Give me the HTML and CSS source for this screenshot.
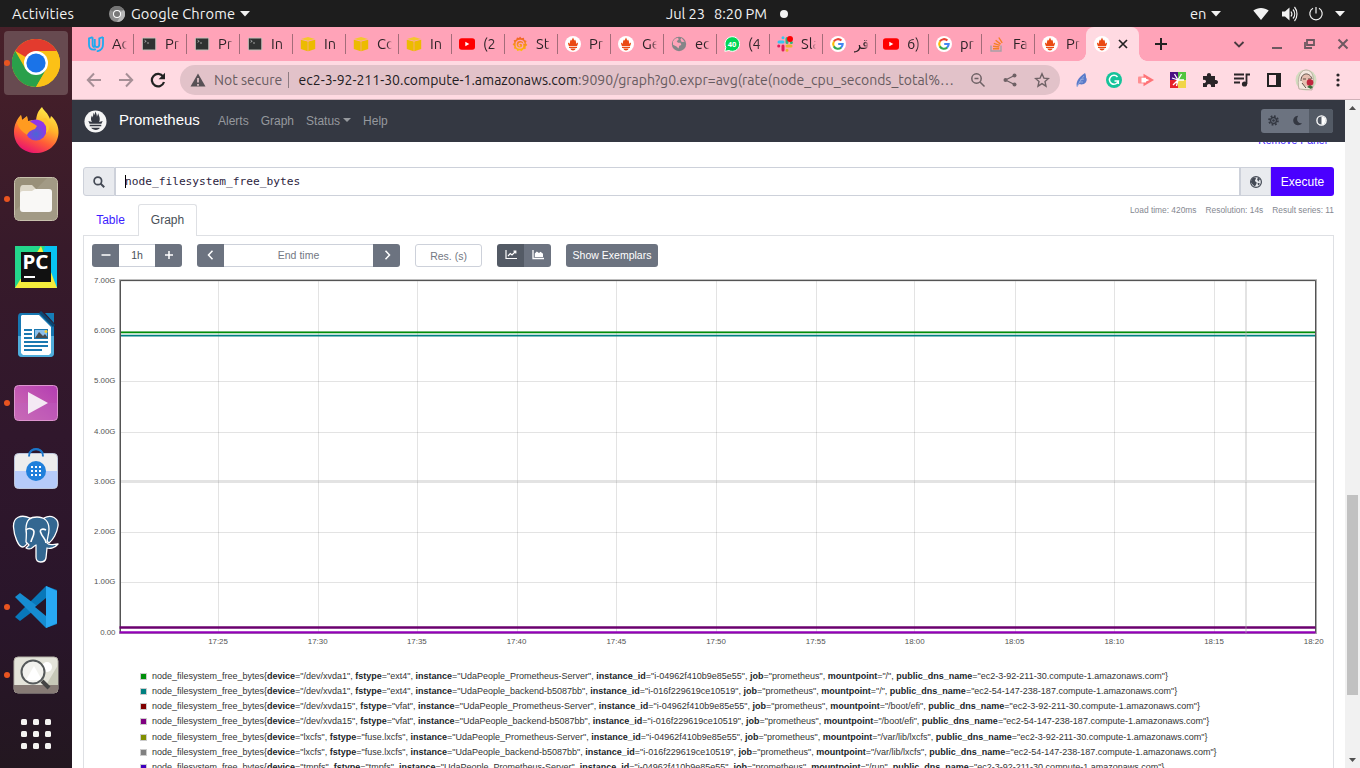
FILE: index.html
```html
<!DOCTYPE html>
<html lang="en">
<head>
<meta charset="utf-8">
<title>Prometheus Time Series Collection and Processing Server</title>
<link rel="stylesheet" href="styles.css">
</head>
<body>
<svg class="defs" aria-hidden="true">
  <defs>
    <symbol id="udacity" viewBox="0 0 16 16"><path d="M4.600 1.200L1 2.300v6.200c0 3.300 2 5.200 4.600 5.200.8 0 1.500-.2 2.200-.6M4.600 1.200v7c0 1.800.8 2.800 2 3M15 1v7.300c0 3.700-2 6.500-6.300 7M15 1l-3.700 1.300v6c0 1.500-.8 2.800-2.300 2.800-1.300 0-2.200-.8-2.200-2.400V3" fill="none" stroke="#1fa9ef" stroke-width="1.800"/></symbol>
    <symbol id="term" viewBox="0 0 16 16"><rect x="1.300" y="2" width="13.500" height="12" rx="1" fill="#2f3231" stroke="#c6c2bc"/><path d="M3.500 4.200l1.700 1.100-1.700 1M6 7h2" stroke="#bbb" stroke-width=".8" fill="none"/></symbol>
    <symbol id="aws" viewBox="0 0 16 16"><path d="M1 3l7-2 7 2-7 1.800z" fill="#f5c72c"/><path d="M.8 3.800l6.900 1.700v9.700L.8 13zM15.200 3.800L8.300 5.500v9.700l6.900-2.200z" fill="#ecbb00"/></symbol>
    <symbol id="youtube" viewBox="0 0 16 16"><rect y="2.300" width="16" height="11.500" rx="2.800" fill="#f00"/><path d="M6.300 5.800v4.500L10.300 8z" fill="#fff"/></symbol>
    <symbol id="grafana" viewBox="0 0 16 16"><linearGradient id="gg" x2="0" y2="1"><stop stop-color="#f15a29"/><stop offset="1" stop-color="#fcc10b"/></linearGradient><path d="M8 .5l1.500 1.800 2.400-.5.4 2.200 2.300 1-.9 2 1.600 2.100-1.700 1.400.1 2.500-2.400.2-1.700 2.100-1.900-1-2.400.8-.9-2-2.500-.7.500-2.200L.6 8.300l1.700-1.500L1.700 4.300l2.400-.6L5 1.500l2 .6z" fill="url(#gg)"/><path d="M12 8c-.1-2.200-1.700-3.700-3.900-3.700-2.400 0-4 1.700-4 4 0 2.200 1.600 3.900 3.700 3.900 1.700 0 3-1.100 3-2.700 0-1.400-1-2.300-2.200-2.300-1.100 0-1.800.8-1.700 1.700.1.700.6 1.100 1.300 1.100" fill="none" stroke="#ffa3b8" stroke-width="1.200"/></symbol>
    <symbol id="prom" viewBox="0 0 16 16"><circle cx="8" cy="8" r="8" fill="#fff"/><path d="M8 1.500c.7 1.300 1 2 1.200 3.200l.8-1.200c.8 1.300 1.300 2.600 1.100 4.200l1.900-1.300c0 1.700-.5 2.700-1 3.600H4C3.500 9.100 3 8.100 3 6.400l1.900 1.300c-.2-1.600.3-2.900 1.100-4.200l.8 1.200C7 3.500 7.300 2.800 8 1.500zM4 10.700h8v1.300H4zM5.300 12.600h5.400c-.4 1.300-1.500 1.900-2.700 1.900s-2.300-.6-2.700-1.900z" fill="#ea4a12"/></symbol>
    <symbol id="globe" viewBox="0 0 16 16"><circle cx="8" cy="8" r="7.200" fill="#858588"/><path d="M2 5.300l2-2.600 3-1 .7 1.700-2 1.800 1.300 1.500h2.500l.8 2.300-2 .7-.8 2.900-2-2.100-3.500-1.800zM10.500 2l3.200 3.700-3 .2-1.300-2.300z" fill="#ffa3b8"/></symbol>
    <symbol id="whatsapp" viewBox="0 0 16 16"><path d="M.8 15.300l1-4A7.300 7.300 0 1 1 5 14.500z" fill="#00d757" stroke="#fff" stroke-width="1"/><text x="8.100" y="10.800" font-size="7.500" font-weight="700" fill="#fff" text-anchor="middle" font-family="Noto Sans,sans-serif">40</text></symbol>
    <symbol id="slack" viewBox="0 0 16 16"><g stroke-width="3" stroke-linecap="round"><path d="M2 6h4M6 1.700v.1" stroke="#36c5f0"/><path d="M10 2.500v4M14.300 6.500h.1" stroke="#2eb67d"/><path d="M10 10h4M10 14.200v.1" stroke="#ecb22e"/><path d="M6 10v4M1.700 10h.1" stroke="#e01e5a"/></g><circle cx="13" cy="3" r="3" fill="#f00"/></symbol>
    <symbol id="google" viewBox="0 0 16 16"><circle cx="8" cy="8" r="8" fill="#fff"/><g fill="none" stroke-width="2.100"><path d="M11.400 4.600A4.800 4.800 0 0 0 3.800 5.600" stroke="#ea4335"/><path d="M3.900 5.500a4.800 4.800 0 0 0 0 5" stroke="#fbbc05"/><path d="M3.800 10.400a4.800 4.800 0 0 0 7.400 1" stroke="#34a853"/><path d="M11 11.600A4.800 4.800 0 0 0 12.700 8H8.200" stroke="#4285f4"/></g></symbol>
    <symbol id="stack" viewBox="0 0 16 16"><path d="M2 9.500V15h10V9.500" fill="none" stroke="#a8a0a5" stroke-width="1.400"/><path d="M4 12.700h6.200M4.100 10.200l6.200.8M4.800 7.300l6 2M6.600 4.300l5 3.800M9.800 1.500l3.400 5.400" stroke="#f48024" stroke-width="1.400"/></symbol>
    <symbol id="tri" viewBox="0 0 10 6"><path d="M0 0h10L5 5.500z" fill="currentColor"/></symbol>
  </defs>
</svg>

<header class="topbar">
  <div class="topbar-left"><span class="activities">Activities</span>
    <svg class="app-icon" viewBox="0 0 16 16"><circle cx="8" cy="8" r="8" fill="#8c8c8c"/><path d="M8 8L1.200 4A8 8 0 0 1 15 4H8z" fill="#757575"/><path d="M8 8l7-4a8 8 0 0 1-7 12l3.500-6z" fill="#b5b5b5"/><circle cx="8" cy="8" r="4" fill="#fff"/><circle cx="8" cy="8" r="3" fill="#777"/></svg>
    <span class="appname">Google Chrome</span><svg class="caret"><use href="#tri"/></svg></div>
  <div class="clock"><span>Jul 23</span><span>8:20 PM</span><i class="notify"></i></div>
  <div class="topbar-right"><span class="lang">en</span><svg class="caret"><use href="#tri"/></svg>
    <svg class="tray wifi" viewBox="0 0 16 16"><path d="M.3 4.500C4.800 1 11.200 1 15.700 4.500L8 14z" fill="#f2f2f2"/></svg>
    <svg class="tray sound" viewBox="0 0 16 16"><path d="M0 5.500h3L7.500 1.500v13L3 10.500H0z" fill="#f2f2f2"/><path d="M9 5.500c1 1.400 1 3.600 0 5M11 3.500c2.200 2.600 2.200 6.400 0 9M12.500 1c3.300 4 3.300 10 0 14" fill="none" stroke="#f2f2f2" stroke-width="1.200"/></svg>
    <svg class="tray power" viewBox="0 0 16 16"><path d="M5 2.300a6.200 6.200 0 1 0 6 0M8 1v6.500" fill="none" stroke="#f2f2f2" stroke-width="1.200"/></svg>
    <svg class="caret"><use href="#tri"/></svg></div>
</header>

<div class="desktop">
<aside class="dock">
  <div class="dock-item active running"><svg viewBox="0 0 48 48"><circle cx="24" cy="24" r="24" fill="#fbc116"/><path d="M24 24L3.200 12A24 24 0 0 1 44.800 12H24z" fill="#e33b2e"/><path d="M13.600 30L3.200 12A24 24 0 0 0 24 48l10.400-18z" fill="#2aa04a"/><path d="M24 12h20.800A24 24 0 0 1 24 48l10.400-18z" fill="#fbc116"/><circle cx="24" cy="24" r="12" fill="#fff"/><circle cx="24" cy="24" r="9.600" fill="#1a73e8"/></svg></div>
  <div class="dock-item"><svg viewBox="0 0 48 48"><defs><linearGradient id="ff" x1=".8" x2=".35" y2="1"><stop stop-color="#fff44f"/><stop offset=".4" stop-color="#ffb52a"/><stop offset=".7" stop-color="#ff5b38"/><stop offset="1" stop-color="#e9146f"/></linearGradient><radialGradient id="fp" cy=".7"><stop stop-color="#4967d4"/><stop offset="1" stop-color="#9036e8"/></radialGradient></defs><path d="M30 0c2 4 6 6 8 12l1-3c4 3 8 10 7.500 17C46 38 36 46 24 46S2 38 2 25c0-7 3-13 7-17l1 5 5-4 1 5c4-1 5-1 8-1 1-6 2-9 6-13z" fill="url(#ff)"/><circle cx="24" cy="23" r="10.500" fill="url(#fp)"/><path d="M5 16l4-8 1 5 5-3 1 4c4 1 6 3 9 5l-2 3c-4 1-7 3-8 6-4-3-8-6-10-12z" fill="#ff9b20"/><path d="M26 13c6 0 10 5 8 13 5-4 4-10 0-15z" fill="#ffc52e"/></svg></div>
  <div class="dock-item running"><svg viewBox="0 0 48 48"><rect x="2.500" y="2.500" width="43" height="43" rx="5" fill="#999079" stroke="#c8c1ad"/><path d="M3 36L35 3h8q2 0 2 2v38q0 2-2 2H3z" fill="#a9a18d" opacity=".6"/><path d="M8 15q0-5 3-5h9l4 4h9v8H8z" fill="#ddd7c8"/><path d="M8 19q0-3 3-3h9l3-2h14q3 0 3 3v17q0 3-3 3H11q-3 0-3-3z" fill="#f9f8f6"/></svg></div>
  <div class="dock-item"><svg viewBox="0 0 48 48"><rect x="3" y="3" width="42" height="42" fill="#21d789"/><path d="M21 45l12-42h12v42z" fill="#07c3f2"/><path d="M3 45L29 3l16 42z" fill="#f5ed3c"/><path d="M3 3h24L3 42z" fill="#24d68c"/><rect x="9" y="9" width="30" height="30" fill="#111"/><text x="10.500" y="25.500" font-family="Noto Sans,sans-serif" font-weight="700" font-size="19" textLength="26" lengthAdjust="spacingAndGlyphs" fill="#fff">PC</text><path d="M12 34h11" stroke="#fff" stroke-width="2"/></svg></div>
  <div class="dock-item"><svg viewBox="0 0 48 48"><path d="M9 2h20l13 13v27q0 4-4 4H10q-4 0-4-4V6q0-4 3-4z" fill="#1777b1"/><path d="M6 25h36v17q0 4-4 4H10q-4 0-4-4z" fill="#50addb"/><path d="M10 4h17l12 12v26l-2 2H11l-2-2V5z" fill="#fff"/><path d="M33 2h9v10z" fill="#167db7"/><path d="M28 1l14 14" stroke="#0b4772" stroke-width="3"/><path d="M12 19h8M12 23h8M12 27h8M12 31h24M12 35h24M12 39h18" stroke="#1a78b0" stroke-width="2"/><rect x="22.500" y="18.500" width="13" height="9" fill="#8abfeb" stroke="#1a78b0"/><path d="M23 27l4-6 4 4 2-2 3 4z" fill="#454c50"/><circle cx="34" cy="20.500" r="1.500" fill="#f5cf38"/></svg></div>
  <div class="dock-item running"><svg viewBox="0 0 48 48"><defs><linearGradient id="vd" y1="1" x2="1" y2="0"><stop stop-color="#ce6fb1"/><stop offset="1" stop-color="#b43db3"/></linearGradient></defs><rect x="2.500" y="6.500" width="43" height="35" rx="4" fill="url(#vd)" stroke="#dc94ce"/><path d="M3 24h42v14q0 3-3 3H6q-3 0-3-3z" fill="#bd60c0" opacity=".35"/><path d="M16 13l20 11-20 11z" fill="#f4e9f4"/></svg></div>
  <div class="dock-item"><svg viewBox="0 0 48 48"><path d="M17 9c0-9 14-9 14 0" fill="none" stroke="#1b76c9" stroke-width="2.200"/><rect x="2.500" y="6.500" width="43" height="35" rx="4" fill="#ededed" stroke="#bbc5db"/><path d="M3 24h42v13q0 4-3 4H6q-3 0-3-4z" fill="#b6cbfa"/><path d="M17 9.500c0-10 14-10 14 0" fill="none" stroke="#1b76c9" stroke-width="2"/><circle cx="24" cy="24" r="10" fill="#2080db"/><path d="M19 20h2m2 0h2m2 0h2M19 24h2m2 0h2m2 0h2M19 28h2m2 0h2m2 0h2" stroke="#fff" stroke-width="2"/></svg></div>
  <div class="dock-item"><svg viewBox="0 0 48 48"><g fill="#336791" stroke="#fff" stroke-width="1.300" stroke-linejoin="round"><path d="M18 3C9-1 1 2 1.500 12c.5 9 5 20 9 20 3 0 5-4 6-6-3-5-3-16 1.500-23z"/><path d="M32 3c7-4 15 0 14 8-1 7-5 14-9 17-4-3-8-15-5-25z"/><path d="M14 14c0-10 5-12 11-12 8 0 12 5 12 12 0 6-2 9-2 14 2 3 7 1 11 1-3 4-8 5-11 4l-1 10c-1 5-10 6-10-1V30c-3 1-4 6-10 3l3-3-3-3c0-4 1-8 0-13z"/></g><path d="M14 15c3-3 8-1 8 2 0 5-3 7-3 10M34 15c-4-2-7 0-5 3 1 4 5 6 5 10" fill="none" stroke="#fff" stroke-width="1.600"/></svg></div>
  <div class="dock-item running"><svg viewBox="0 0 48 48"><path d="M3 34l5 4L45 10V7L34 3z" fill="#0877b9"/><path d="M3 14l5-4 37 28v3l-11 4z" fill="#168cd1"/><path d="M34 3l11 5v32l-11 5z" fill="#28a8f3"/><path d="M34 15L23 24l11 9z" fill="#261528"/></svg></div>
  <div class="dock-item running"><svg viewBox="0 0 48 48"><rect x="2" y="6" width="44" height="36" rx="4" fill="#e4e4da" stroke="#b6b3a9"/><path d="M30 41L46 14v24q0 3-3 3z" fill="#c7c8b8"/><path d="M2 34h44v4q0 4-3 4H5q-3 0-3-4z" fill="#877b76"/><circle cx="35" cy="16" r="5" fill="#fff"/><path d="M14 29l8-14 8 14z" fill="#fff"/><circle cx="21" cy="21" r="11.500" fill="#fff8" stroke="#55595a" stroke-width="2"/><path d="M30 30l7 7" stroke="#444" stroke-width="4"/></svg></div>
  <div class="dock-item show-apps"><svg viewBox="0 0 30 30" fill="#f4f2f1"><rect width="6" height="6" rx="1.500"/><rect x="12" width="6" height="6" rx="1.500"/><rect x="24" width="6" height="6" rx="1.500"/><rect y="12" width="6" height="6" rx="1.500"/><rect x="12" y="12" width="6" height="6" rx="1.500"/><rect x="24" y="12" width="6" height="6" rx="1.500"/><rect y="24" width="6" height="6" rx="1.500"/><rect x="12" y="24" width="6" height="6" rx="1.500"/><rect x="24" y="24" width="6" height="6" rx="1.500"/></svg></div>
</aside>

<main class="browser">
  <nav class="tabs">
    <div class="tab"><svg><use href="#udacity"/></svg><span>Ac</span></div>
    <div class="tab"><svg><use href="#term"/></svg><span>Pr</span></div>
    <div class="tab"><svg><use href="#term"/></svg><span>Pr</span></div>
    <div class="tab"><svg><use href="#term"/></svg><span>In</span></div>
    <div class="tab"><svg><use href="#aws"/></svg><span>In</span></div>
    <div class="tab"><svg><use href="#aws"/></svg><span>Co</span></div>
    <div class="tab"><svg><use href="#aws"/></svg><span>In</span></div>
    <div class="tab"><svg><use href="#youtube"/></svg><span>(2</span></div>
    <div class="tab"><svg><use href="#grafana"/></svg><span>St</span></div>
    <div class="tab"><svg><use href="#prom"/></svg><span>Pr</span></div>
    <div class="tab"><svg><use href="#prom"/></svg><span>Ge</span></div>
    <div class="tab"><svg><use href="#globe"/></svg><span>ec</span></div>
    <div class="tab"><svg><use href="#whatsapp"/></svg><span>(4</span></div>
    <div class="tab"><svg><use href="#slack"/></svg><span>Sla</span></div>
    <div class="tab"><svg><use href="#google"/></svg><span>قر</span></div>
    <div class="tab"><svg><use href="#youtube"/></svg><span>6)</span></div>
    <div class="tab"><svg><use href="#google"/></svg><span>pr</span></div>
    <div class="tab"><svg><use href="#stack"/></svg><span>Fa</span></div>
    <div class="tab last"><svg><use href="#prom"/></svg><span>Pr</span></div>
    <div class="tab current"><svg><use href="#prom"/></svg><svg class="close" viewBox="0 0 10 10"><path d="M1 1l8 8M9 1L1 9" stroke="#222" stroke-width="1.700"/></svg></div>
    <svg class="newtab" viewBox="0 0 12 12"><path d="M6 0v12M0 6h12" stroke="#222" stroke-width="2"/></svg>
    <div class="winctl">
      <svg viewBox="0 0 16 16"><path d="M3.500 6L8 10.500 12.500 6" fill="none" stroke="#4a3a40" stroke-width="1.800"/></svg>
      <svg viewBox="0 0 16 16"><path d="M3 12h10" stroke="#6d5860" stroke-width="2"/></svg>
      <svg viewBox="0 0 16 16"><path d="M6 4h7v5H6zM4 6v6h7" fill="none" stroke="#6d5860" stroke-width="1.800"/></svg>
      <svg viewBox="0 0 16 16"><path d="M3.500 3.500l9 9M12.500 3.500l-9 9" stroke="#6d5860" stroke-width="2"/></svg>
    </div>
  </nav>
  <div class="toolbar">
    <svg class="tb" viewBox="0 0 16 16"><path d="M15 8H2M8 1.500L1.800 8 8 14.500" fill="none" stroke="#a68f96" stroke-width="2"/></svg>
    <svg class="tb" viewBox="0 0 16 16"><path d="M1 8h13M8 1.500L14.200 8 8 14.500" fill="none" stroke="#a68f96" stroke-width="2"/></svg>
    <svg class="tb" viewBox="0 0 16 16"><path d="M13.200 4.600A6.200 6.200 0 1 0 14 10" fill="none" stroke="#222" stroke-width="2.200"/><path d="M15 .8v6.400H8.600z" fill="#222"/></svg>
    <div class="omnibox">
      <svg class="warn" viewBox="0 0 16 14"><path d="M8 0.500l7.500 13H.5z" fill="#575055"/><path d="M8 5v4.500M8 11v1.700" stroke="#e2c4ca" stroke-width="1.700"/></svg>
      <span class="insecure">Not secure</span><span class="url"><b>ec2-3-92-211-30.compute-1.amazonaws.com</b>:9090/graph?g0.expr=avg(rate(node_cpu_seconds_total%…</span>
      <svg class="tb" viewBox="0 0 16 16"><circle cx="6.500" cy="6.500" r="4.700" fill="none" stroke="#6e6165" stroke-width="1.500"/><path d="M10 10l4.500 4.500M4.500 6.500h4" stroke="#6e6165" stroke-width="1.500"/></svg>
      <svg class="tb" viewBox="0 0 16 16"><path d="M12.500 3.500L3.500 8l9 4.500" fill="none" stroke="#6e6165" stroke-width="1.300"/><g fill="#6e6165"><circle cx="12.500" cy="3.500" r="2"/><circle cx="3.500" cy="8" r="2"/><circle cx="12.500" cy="12.500" r="2"/></g></svg>
      <svg class="tb" viewBox="0 0 16 16"><path d="M8 1.800l1.900 4.300 4.600.4L11 9.600l1 4.600-4-2.500-4 2.500 1-4.600-3.500-3.100 4.600-.4z" fill="none" stroke="#6e6165" stroke-width="1.400"/></svg>
    </div>
    <svg class="tb" viewBox="0 0 16 16"><path d="M3 15c-1.500-5 1-9 8-14 1 2 1 3 1 4.500 1.500 2 .5 5-2 6.500-3 1-5 0-5 0z" fill="#5b7bc9"/><path d="M3 15c2-5 4-7 7-11M6 8l4-1M5 10l4 0" stroke="#9db3e3" fill="none" stroke-width=".8"/></svg>
    <svg class="tb" viewBox="0 0 16 16"><circle cx="8" cy="8" r="8" fill="#15c39a"/><path d="M11.500 5A4.500 4.500 0 1 0 12.300 9H8.500M12.300 8.500V12" fill="none" stroke="#fff" stroke-width="1.500"/></svg>
    <svg class="tb" viewBox="0 0 16 16"><rect y="4.500" width="7" height="7" rx="1" fill="#ff9092"/><path d="M5.500 1.700L16 8 5.500 14.300z" fill="#ff7377"/><path d="M3.500 5.700h4.500v1L11.500 8 8 9.500v1H3.500z" fill="#fff"/></svg>
    <svg class="tb" viewBox="0 0 16 16"><path fill="#4b1082" d="M0 0h8v8H0z"/><path fill="#52c43e" d="M8 0h8v8H8z"/><path fill="#e62129" d="M0 8h8v8H0z"/><path fill="#f1d548" d="M8 8h8v8H8z"/><path d="M8 8L4.500 2M8 8l3.500-6M8 8h6M8 8l-5 5M8 8l-1.500 6M8 8L2 6" stroke="#fff" stroke-width="1.300"/></svg>
    <svg class="tb" viewBox="0 0 16 16"><path d="M1 4h4c-1-4 5-4 4 0h4v4c4-1 4 5 0 4v3H9c1-4-5-4-4 0H1v-4c4 1 4-4 0-3z" fill="#2a2528"/></svg>
    <svg class="tb" viewBox="0 0 16 16"><path d="M0 2.500h10M0 6.500h10M0 10.500h6M12.500 12V2.500H16" stroke="#2a2528" stroke-width="1.800" fill="none"/><circle cx="10.500" cy="12" r="2.600" fill="#2a2528"/></svg>
    <svg class="tb" viewBox="0 0 16 16"><rect x="2" y="2" width="12" height="12" fill="none" stroke="#222" stroke-width="2"/><path d="M10 2h4v12h-4z" fill="#222"/></svg>
    <svg class="avatar" viewBox="0 0 22 22"><circle cx="11" cy="11" r="10.500" fill="#d3dcc0"/><path d="M4 20C2 12 4 1 11 1s9 8 6 20z" fill="#f4e8df" stroke="#a89a8c" stroke-width=".7"/><path d="M7 9c1-5 8-5 9 0l-1 7c-3 3-7 0-8-3z" fill="#e6bfb0"/><path d="M6 12C6 3 15 3 17 10M8 10h3m2 0h3M7 14l4 5" fill="none" stroke="#5e4a40"/><circle cx="15" cy="13.500" r="3.300" fill="#c2253e"/><path d="M12 18l3-2 3 2-2 2z" fill="#3b6c39"/></svg>
    <svg class="tb" viewBox="0 0 16 16" fill="#2a2528"><circle cx="8" cy="3" r="1.600"/><circle cx="8" cy="8" r="1.600"/><circle cx="8" cy="13" r="1.600"/></svg>
  </div>

  <div class="viewport">
  <div class="page">
    <nav class="navbar">
      <svg class="logo" viewBox="0 0 24 24"><circle cx="12" cy="12" r="11.500" fill="#f5f5f5"/><path d="M11.800 1.500c1 2 1.600 3.200 1.700 5.500l1.400-3.500c.3 2.500 2 4 1.500 7l-.6 2 3.700-1-1.300 2.800H5.800L4.500 11.500l3.700 1-.8-2c-.3-2 .2-3.500.9-4.700l1 2c.2-2 .2-3.500 1-5l.8 2.700zM6 15.500h12v1.500H6zM7.500 18.500h9c-1 3-7 3-9 0z" fill="#343842"/></svg>
      <span class="brand">Prometheus</span>
      <a>Alerts</a><a>Graph</a><a class="drop">Status</a><a>Help</a>
      <div class="themes">
        <span><svg viewBox="0 0 16 16"><g stroke="#343842" fill="none"><circle cx="8" cy="8" r="4.300" stroke-width="2"/><circle cx="8" cy="8" r="6.500" stroke-width="2.500" stroke-dasharray="2.600 2.500"/></g><circle cx="8" cy="8" r="1.900" fill="#343842"/></svg></span>
        <span><svg viewBox="0 0 16 16"><path d="M9 1a7 7 0 1 0 5.500 11C9 13 5 7 9 1z" fill="#343842"/></svg></span>
        <span class="on"><svg viewBox="0 0 16 16"><circle cx="8" cy="8" r="6.700" fill="none" stroke="#fff" stroke-width="2"/><path d="M8 2a6 6 0 0 1 0 12z" fill="#fff"/></svg></span>
      </div>
    </nav>
    <div class="content">
      <div class="remove"><a>Remove Panel</a></div>
      <div class="query">
        <span class="addon search"><svg viewBox="0 0 16 16"><circle cx="6.500" cy="6.500" r="5" fill="none" stroke="#444a55" stroke-width="2.300"/><path d="M10 10l5 5" stroke="#444a55" stroke-width="2.500"/></svg></span>
        <div class="expr"><i class="cursor"></i>node_filesystem_free_bytes</div>
        <span class="addon globe"><svg viewBox="0 0 16 16"><circle cx="8" cy="8" r="7.200" fill="#e9ebef" stroke="#444a55" stroke-width="1.600"/><path d="M1 8l2-5 4-1.500 1 2L6.500 6l1 1.500 1.500 1-.5 2L6.500 14 4 12zM10.500 2l3 2-2 2.500 1.500 1.500L11 7 9.500 5zM10 9l3 .5-1 3-1.500-1z" fill="#444a55"/></svg></span>
        <button class="execute">Execute</button>
      </div>
      <div class="tabrow">
        <span class="ptab">Table</span><span class="ptab sel">Graph</span>
        <div class="stats"><span>Load time: 420ms</span><span>Resolution: 14s</span><span>Result series: 11</span></div>
      </div>
      <section class="panel">
        <div class="controls">
          <div class="group"><span class="btn"><svg viewBox="0 0 10 10"><path d="M.5 5h9" stroke="#fff" stroke-width="1.500"/></svg></span><span class="field range">1h</span><span class="btn"><svg viewBox="0 0 10 10"><path d="M1 5h8M5 1v8" stroke="#fff" stroke-width="1.500"/></svg></span></div>
          <div class="group"><span class="btn"><svg viewBox="0 0 10 10"><path d="M6.500.8L2.500 5l4 4.200" fill="none" stroke="#fff" stroke-width="1.500"/></svg></span><span class="field end">End time</span><span class="btn"><svg viewBox="0 0 10 10"><path d="M3.500.8l4 4.200-4 4.200" fill="none" stroke="#fff" stroke-width="1.500"/></svg></span></div>
          <span class="field res">Res. (s)</span>
          <div class="group"><span class="btn dark"><svg class="ch" viewBox="0 0 12 10"><path d="M1 0v8.500h11M3 6l2.300-2.500L7 5l3.500-3.500M8.500 1.200h2.300V3.500" fill="none" stroke="#fff" stroke-width="1.200"/></svg></span><span class="btn"><svg class="ch" viewBox="0 0 12 10"><path d="M1 0v8.500h11" fill="none" stroke="#fff" stroke-width="1.300"/><path d="M2.800 7V3.500l2-2L7 3l1.500-1.200L11 3.700V7z" fill="#fff"/></svg></span></div>
          <span class="btn ex">Show Exemplars</span>
        </div>
        <svg class="chart" viewBox="84 268 1249 392">
          <path d="M218.500 281v352M318.500 281v352M417.500 281v352M517.500 281v352M616.500 281v352M716.500 281v352M816.500 281v352M914.500 281v352M1015.500 281v352M1114.500 281v352M1214.500 281v352M121 331.500h1195M121 381.500h1195M121 432.500h1195M121 482.500h1195M121 532.500h1195M121 582.500h1195" class="grid"/>
          <path d="M120 280.200h1196v352.800H120z" class="frame-outer"/>
          <path d="M120.500 280.500h1195v352h-1195z" class="frame"/>
          <path d="M121 332.300h1194" stroke="#008f0a" stroke-width="1.700"/>
          <path d="M121 335.600h1194" stroke="#008080" stroke-width="1.600"/>
          <path d="M119.500 627.500h1196" stroke="#6b006f" stroke-width="2.500"/>
          <path d="M119.500 632.300h1196" stroke="#9300b8" stroke-width="2.300"/>
          <path d="M121 481h1194M1246 281v352" class="cross"/>
          <g class="ylab"><text x="115.500" y="283.300">7.00G</text><text x="115.500" y="333.300">6.00G</text><text x="115.500" y="383.300">5.00G</text><text x="115.500" y="434.300">4.00G</text><text x="115.500" y="484.300">3.00G</text><text x="115.500" y="534.300">2.00G</text><text x="115.500" y="584.300">1.00G</text><text x="115.500" y="635.300">0.00</text></g>
          <g class="xlab"><text x="218" y="644">17:25</text><text x="317.700" y="644">17:30</text><text x="416.800" y="644">17:35</text><text x="516.500" y="644">17:40</text><text x="616.300" y="644">17:45</text><text x="716" y="644">17:50</text><text x="815.700" y="644">17:55</text><text x="914.700" y="644">18:00</text><text x="1014.500" y="644">18:05</text><text x="1114.300" y="644">18:10</text><text x="1214" y="644">18:15</text><text x="1313.700" y="644">18:20</text></g>
        </svg>
        <div class="legend">
          <div class="series"><i class="c1"></i><span>node_filesystem_free_bytes{<b>device</b>="/dev/xvda1", <b>fstype</b>="ext4", <b>instance</b>="UdaPeople_Prometheus-Server", <b>instance_id</b>="i-04962f410b9e85e55", <b>job</b>="prometheus", <b>mountpoint</b>="/", <b>public_dns_name</b>="ec2-3-92-211-30.compute-1.amazonaws.com"}</span></div>
          <div class="series"><i class="c2"></i><span>node_filesystem_free_bytes{<b>device</b>="/dev/xvda1", <b>fstype</b>="ext4", <b>instance</b>="UdaPeople_backend-b5087bb", <b>instance_id</b>="i-016f229619ce10519", <b>job</b>="prometheus", <b>mountpoint</b>="/", <b>public_dns_name</b>="ec2-54-147-238-187.compute-1.amazonaws.com"}</span></div>
          <div class="series"><i class="c3"></i><span>node_filesystem_free_bytes{<b>device</b>="/dev/xvda15", <b>fstype</b>="vfat", <b>instance</b>="UdaPeople_Prometheus-Server", <b>instance_id</b>="i-04962f410b9e85e55", <b>job</b>="prometheus", <b>mountpoint</b>="/boot/efi", <b>public_dns_name</b>="ec2-3-92-211-30.compute-1.amazonaws.com"}</span></div>
          <div class="series"><i class="c4"></i><span>node_filesystem_free_bytes{<b>device</b>="/dev/xvda15", <b>fstype</b>="vfat", <b>instance</b>="UdaPeople_backend-b5087bb", <b>instance_id</b>="i-016f229619ce10519", <b>job</b>="prometheus", <b>mountpoint</b>="/boot/efi", <b>public_dns_name</b>="ec2-54-147-238-187.compute-1.amazonaws.com"}</span></div>
          <div class="series"><i class="c5"></i><span>node_filesystem_free_bytes{<b>device</b>="lxcfs", <b>fstype</b>="fuse.lxcfs", <b>instance</b>="UdaPeople_Prometheus-Server", <b>instance_id</b>="i-04962f410b9e85e55", <b>job</b>="prometheus", <b>mountpoint</b>="/var/lib/lxcfs", <b>public_dns_name</b>="ec2-3-92-211-30.compute-1.amazonaws.com"}</span></div>
          <div class="series"><i class="c6"></i><span>node_filesystem_free_bytes{<b>device</b>="lxcfs", <b>fstype</b>="fuse.lxcfs", <b>instance</b>="UdaPeople_backend-b5087bb", <b>instance_id</b>="i-016f229619ce10519", <b>job</b>="prometheus", <b>mountpoint</b>="/var/lib/lxcfs", <b>public_dns_name</b>="ec2-54-147-238-187.compute-1.amazonaws.com"}</span></div>
          <div class="series"><i class="c7"></i><span>node_filesystem_free_bytes{<b>device</b>="tmpfs", <b>fstype</b>="tmpfs", <b>instance</b>="UdaPeople_Prometheus-Server", <b>instance_id</b>="i-04962f410b9e85e55", <b>job</b>="prometheus", <b>mountpoint</b>="/run", <b>public_dns_name</b>="ec2-3-92-211-30.compute-1.amazonaws.com"}</span></div>
        </div>
      </section>
    </div>
  </div>
  <div class="scrollbar"><svg class="up" viewBox="0 0 7 4"><path d="M0 4l3.500-4L7 4z"/></svg><i class="thumb"></i><svg class="down" viewBox="0 0 7 4"><path d="M0 0h7L3.500 4z"/></svg></div>
  </div>
</main>
</div>
</body>
</html>
```
FILE: styles.css
```css
* { box-sizing: border-box; }
body { margin: 0; width: 1360px; height: 768px; overflow: hidden; font-family: "Liberation Sans", Arial, sans-serif; background: #fff; }
svg { display: block; flex: none; }
.defs { position: absolute; width: 0; height: 0; }

/* GNOME top bar */
.topbar { height: 27px; background: #1d1d1d; color: #f2f2f2; display: grid; grid-template-columns: 600px 1fr 560px; align-items: center; font: 14.67px/27px Ubuntu, "Noto Sans", sans-serif; white-space: nowrap; }
.topbar-left, .topbar-right, .clock { display: flex; align-items: center; height: 27px; }
.topbar-left { padding-left: 12px; }
.activities { width: 97px; letter-spacing: .2px; }
.app-icon { width: 16px; height: 16px; margin-right: 6px; }
.appname { width: 104px; letter-spacing: .1px; margin-right: 5px; }
.caret { width: 10px; height: 6px; }
.clock { padding-left: 66px; gap: 11px; letter-spacing: -.05px; }
.clock span:first-child { width: 37px; }
.clock span:nth-child(2) { width: 53px; }
.notify { width: 8px; height: 8px; border-radius: 50%; background: #f2f2f2; margin-left: 2px; }
.topbar-right { padding-left: 390px; }
.lang { width: 21px; }
.tray { width: 16px; height: 16px; }
.wifi { margin-left: 32px; }
.sound { margin-left: 13px; }
.power { margin: 0 11px 0 10px; }

.desktop { display: flex; height: 741px; }
.dock { width: 72px; padding: 4px; display: flex; flex-direction: column; gap: 4px; background: linear-gradient(#482029, #371a2a 30%, #30172c 55%, #29152a 80%, #231720); }
.dock-item { position: relative; width: 64px; height: 64px; flex: none; border-radius: 4px; display: flex; align-items: center; justify-content: center; }
.dock-item svg { width: 48px; height: 48px; }
.dock-item.active { background: #674a50; }
.dock-item.running::before { content: ""; position: absolute; left: 0; top: 29px; width: 6px; height: 6px; border-radius: 50%; background: #e95420; }
.show-apps { margin-top: -9px; }
.dock-item.show-apps svg { width: 30px; height: 30px; }

/* Browser chrome */
.browser { width: 1288px; display: flex; flex-direction: column; }
.tabs { height: 34px; background: #ffa3b8; padding-left: 9px; display: flex; align-items: center; font: 14.67px/34px Ubuntu, "Noto Sans", sans-serif; color: #2b2226; }
.tab { width: 53px; height: 20px; border-right: 1px solid #a36c79; padding-left: 7px; display: flex; align-items: center; gap: 8px; flex: none; }
.tab svg { width: 16px; height: 16px; }
.tab span { width: 15px; overflow: hidden; line-height: 20px; white-space: nowrap; -webkit-mask-image: linear-gradient(90deg, #000 65%, transparent); mask-image: linear-gradient(90deg, #000 65%, transparent); }
.tab.last { border-color: transparent; width: 51px; }
.tab.last span { width: 14px; }
.tab.current { position: relative; height: 34px; width: 53px; padding-left: 8px; gap: 8px; background: #ffdae2; border: 0; border-radius: 8px 8px 0 0; }
.tab.current::before, .tab.current::after { content: ""; position: absolute; bottom: 0; width: 8px; height: 8px; }
.tab.current::before { left: -8px; background: radial-gradient(circle at 0 0, transparent 7.5px, #ffdae2 8px); }
.tab.current::after { right: -8px; background: radial-gradient(circle at 100% 0, transparent 7.5px, #ffdae2 8px); }
.tab.current .close { width: 10px; height: 10px; }
.newtab { width: 12px; height: 12px; margin-left: 16px; }
.winctl { margin-left: 64px; display: flex; gap: 18px; }
.winctl svg { width: 16px; height: 16px; }
.winctl svg:nth-child(1) { margin-right: 4px; }
.winctl svg:nth-child(2) { margin-right: -2px; }
.toolbar { height: 39px; background: #ffdae2; border-bottom: 1px solid #cfb1b8; padding-left: 14px; display: flex; align-items: center; gap: 16px; }
.tb { width: 16px; height: 16px; }
.omnibox { width: 880px; height: 30px; margin: 0 -2px 0 -2px; border-radius: 15px; background: #e2c2c9; display: flex; align-items: center; padding: 0 10px; gap: 16px; font: 14px/30px Ubuntu, "Noto Sans", sans-serif; color: #675b60; white-space: nowrap; }
.warn { width: 16px; height: 14px; }
.insecure { width: 77px; height: 16px; line-height: 16px; margin-left: -8px; border-right: 1px solid #8e7c82; }
.url { width: 661px; margin-left: -6px; }
.url b { font-weight: 400; color: #221c1f; }
.avatar { width: 22px; height: 22px; margin: 0 -3px; }

/* Prometheus page */
.viewport { display: flex; height: 668px; overflow: hidden; }
.page { width: 1273px; height: 668px; overflow: hidden; background: #fff; }
.navbar { position: relative; z-index: 1; height: 42px; background: #343842; padding: 0 12px; display: flex; align-items: center; font-size: 12px; color: #96999e; }
.logo { width: 23px; height: 23px; }
.brand { font-size: 15px; line-height: 17px; color: #fff; margin: -3px 18px 0 12px; width: 81px; }
.navbar a { margin-right: 12px; }
.drop::after { content: ""; display: inline-block; margin-left: 3px; vertical-align: 3px; border: 4px solid transparent; border-top-color: currentColor; border-bottom: 0; }
.themes { margin-left: auto; display: flex; width: 72px; height: 24px; border-radius: 3px; overflow: hidden; background: #6c7380; }
.themes span { width: 24px; display: flex; align-items: center; justify-content: center; padding-bottom: 1px; }
.themes svg { width: 11px; height: 11px; }
.themes .on { background: #535a65; }
.content { padding: 0 11px; }
.remove { height: 14px; margin-top: -9px; margin-bottom: 20px; padding-right: 7px; text-align: right; font-size: 10.5px; line-height: 14px; color: #3c1cff; }
.query { height: 29px; display: flex; }
.addon { width: 32px; background: #e9ebef; border: 1px solid #cdd1da; display: flex; align-items: center; justify-content: center; }
.addon svg { width: 12px; height: 12px; }
.addon.search { border-radius: 3px 0 0 3px; }
.addon.globe { width: 31px; }
.expr { flex: 1; border: 1px solid #cdd1da; display: flex; align-items: center; padding-left: 9px; font: 11.2px "DejaVu Sans Mono", monospace; color: #2c2440; }
.cursor { width: 1px; height: 13px; background: #000; margin-right: -1px; }
.execute { width: 63px; padding: 0; border: 0; border-radius: 0 3px 3px 0; background: #4a00ff; color: #fff; font: 12px "Liberation Sans", Arial, sans-serif; }
.tabrow { height: 39px; padding-top: 8px; display: flex; }
.ptab { width: 55px; text-align: center; font-size: 12px; line-height: 32px; color: #3c1cff; }
.ptab.sel { position: relative; width: 59px; height: 32px; line-height: 30px; border: 1px solid #dee0e4; border-bottom: 0; border-radius: 3px 3px 0 0; background: #fff; color: #495057; }
.stats { margin-left: auto; display: flex; gap: 9px; font-size: 8.4px; line-height: 12px; color: #858891; }
.panel { border: 1px solid #dee0e4; height: 700px; }
.controls { display: flex; gap: 15px; padding: 8px 8px 0; height: 32px; font-size: 10.5px; }
.group { display: flex; height: 23px; border-radius: 3px; overflow: hidden; }
.btn { width: 27px; height: 23px; background: #6c7380; color: #fff; display: flex; align-items: center; justify-content: center; padding-bottom: 1px; }
.btn svg { width: 10px; height: 10px; }
.btn svg.ch { width: 12px; height: 10px; }
.btn.dark { background: #535a65; }
.btn.ex { width: 92px; border-radius: 3px; padding-bottom: 2px; }
.field { height: 23px; border: 1px solid #cdd1da; border-width: 1px 0; display: flex; align-items: center; justify-content: center; color: #737883; padding-bottom: 2px; }
.range { width: 36px; color: #495057; }
.end { width: 149px; }
.res { width: 67px; border-width: 1px; border-radius: 3px; padding: 1px 0 0; }
.chart { width: 1249px; height: 392px; }
.grid { stroke: #000; stroke-opacity: .11; fill: none; }
.frame-outer { fill: none; stroke: #aaa; stroke-width: 2; }
.frame { fill: none; stroke: #545454; stroke-width: 1; }
.cross { fill: none; stroke: #aaa; stroke-opacity: .45; stroke-width: 1.5; }
.ylab, .xlab { font: 7.9px "Liberation Sans", Arial, sans-serif; fill: #545454; }
.ylab { text-anchor: end; }
.xlab { text-anchor: middle; }
.legend { padding: 8.4px 0 0 56px; }
.series { height: 15.25px; display: flex; align-items: center; font-size: 9.01px; line-height: 15px; color: #333; white-space: nowrap; }
.series i { width: 7px; height: 7px; border: 1px solid #ccc; margin-right: 5px; }
.series b { color: #212529; }
.c1 { background: #008f0a; }
.c2 { background: #008080; }
.c3 { background: #800000; }
.c4 { background: #800080; }
.c5 { background: #808f00; }
.c6 { background: #808080; }
.c7 { background: #4000c0; }

.scrollbar { position: relative; width: 15px; background: #f1f1f1; }
.thumb { position: absolute; left: 2px; top: 395px; width: 11px; height: 200px; background: #c1c1c1; }
.up, .down { position: absolute; left: 4px; width: 7px; height: 4px; fill: #505050; }
.up { top: 6px; }
.down { bottom: 6px; }
```
